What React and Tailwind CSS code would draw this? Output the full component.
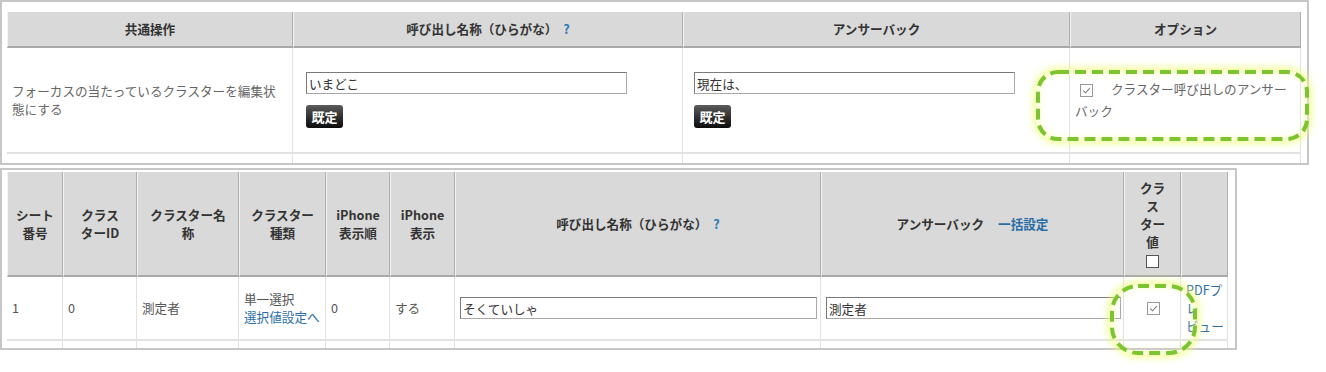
import React from 'react';

const linkColor = 'text-[#2b6ea6]';

function CheckBox({ checked, dark }) {
    return (
        <span
            className={
                'inline-flex h-[13px] w-[13px] items-center justify-center bg-white align-middle border ' +
                (dark ? 'border-[#555]' : 'border-[#9a9a9a]')
            }
        >
            {checked && (
                <svg viewBox="0 0 12 12" className="h-[11px] w-[11px]">
                    <path d="M2.5 6.2 L5 8.6 L9.6 3.4" fill="none" stroke="#7a7a7a" strokeWidth="1.1" />
                </svg>
            )}
        </span>
    );
}

function DefaultButton() {
    return (
        <button className="h-[23px] w-[37px] rounded-[3px] bg-linear-to-b from-[#5c5c5c] to-[#0d0d0d] text-[13px] font-bold leading-[23px] text-white">
            既定
        </button>
    );
}

function TextInput({ value, width }) {
    return (
        <input
            readOnly
            value={value}
            className={
                'h-[22px] border border-[#a8a8a8] border-t-[#7a7a7a] border-l-[#7a7a7a] bg-white px-[2px] text-[12.6px] text-[#333] outline-none ' +
                width
            }
        />
    );
}

function Highlight({ className, rx, w, h }) {
    return (
        <div
            className={
                'pointer-events-none absolute shadow-[0_0_7px_3px_rgba(238,255,120,0.7),inset_0_0_7px_3px_rgba(245,255,150,0.6)] ' +
                className
            }
        >
            <svg width={w} height={h} className="block">
                <rect
                    x="2"
                    y="2"
                    width={w - 4}
                    height={h - 4}
                    rx={rx}
                    fill="none"
                    stroke="#7cc530"
                    strokeWidth="4"
                    strokeDasharray="11 6"
                />
            </svg>
        </div>
    );
}

const topHead =
    'flex h-[36px] items-center justify-center bg-[#d9d9d9] border-b-2 border-b-[#a9a9a9] border-r border-r-[#aeaeae] border-l border-l-[#f2f2f2] font-bold text-[#333]';
const topCell = 'h-[106px] border-b-2 border-b-[#e2e2e2] border-r border-r-[#e2e2e2]';
const botHead =
    'flex h-[105px] flex-col items-center justify-center bg-[#d9d9d9] border-b-2 border-b-[#a9a9a9] border-r border-r-[#aeaeae] border-l border-l-[#f2f2f2] text-center font-bold text-[#333]';
const botCell = 'flex h-[64px] items-center border-b-2 border-b-[#e2e2e2] border-r border-r-[#e2e2e2] px-[5px]';
const gray = ' text-[#555]';
const stub = 'h-[20px] border-r border-r-[#e2e2e2]';

function App() {
    return (
        <div className="relative h-[372px] w-[1326px] overflow-hidden bg-white font-['Noto_Sans_CJK_JP','Noto_Sans',sans-serif] text-[12.6px] leading-[18px]">
            {/* Common operations */}
            <div className="h-[165px] w-[1309px] overflow-hidden border-2 border-[#c6c6c6] pl-[5px] pt-[10px]">
                <div className="grid grid-cols-[286px_390px_387px_231px]">
                    <div className={topHead}>共通操作</div>
                    <div className={topHead}>
                        呼び出し名称（ひらがな）<span className="ml-[6px] text-[#2d7ab8]">?</span>
                    </div>
                    <div className={topHead}>アンサーバック</div>
                    <div className={topHead}>オプション</div>

                    <div className={topCell + ' flex items-center px-[5px] text-[#666]'}>
                        <span>
                            フォーカスの当たっているクラスターを編集状
                            <br />
                            態にする
                        </span>
                    </div>
                    <div className={topCell + ' flex flex-col items-start justify-center gap-[11px] pl-[13px]'}>
                        <TextInput value="いまどこ" width="w-[321px]" />
                        <DefaultButton />
                    </div>
                    <div className={topCell + ' flex flex-col items-start justify-center gap-[11px] pl-[11px]'}>
                        <TextInput value="現在は、" width="w-[321px]" />
                        <DefaultButton />
                    </div>
                    <div className={topCell + ' flex items-center px-[5px] leading-[22px] text-[#666]'}>
                        <span>
                            <span className="ml-[5px] mr-[18px]">
                                <CheckBox checked />
                            </span>
                            クラスター呼び出しのアンサー
                            <br />
                            バック
                        </span>
                    </div>

                    <div className={stub}></div>
                    <div className={stub}></div>
                    <div className={stub}></div>
                    <div className={stub}></div>
                </div>
            </div>

            {/* Cluster list */}
            <div className="mt-[3px] h-[182px] w-[1237px] overflow-hidden border-2 border-[#c6c6c6] pl-[5px] pt-[2px]">
                <div className="grid grid-cols-[56px_74px_102px_87px_64px_65px_366px_303px_57px_47px]">
                    <div className={botHead}>
                        <span>シート<br />番号</span>
                    </div>
                    <div className={botHead}>
                        <span>クラス<br />ターID</span>
                    </div>
                    <div className={botHead}>
                        <span>クラスター名<br />称</span>
                    </div>
                    <div className={botHead}>
                        <span>クラスター<br />種類</span>
                    </div>
                    <div className={botHead}>
                        <span>iPhone<br />表示順</span>
                    </div>
                    <div className={botHead}>
                        <span>iPhone<br />表示</span>
                    </div>
                    <div className={botHead}>
                        <span>
                            呼び出し名称（ひらがな）<span className="ml-[6px] text-[#2d7ab8]">?</span>
                        </span>
                    </div>
                    <div className={botHead}>
                        <span>
                            アンサーバック<span className={'ml-[14px] ' + linkColor}>一括設定</span>
                        </span>
                    </div>
                    <div className={botHead}>
                        <span>クラ<br />ス<br />ター<br />値</span>
                        <span className="mt-[4px] flex">
                            <CheckBox dark />
                        </span>
                    </div>
                    <div className={botHead}></div>

                    <div className={botCell + gray}>1</div>
                    <div className={botCell + gray}>0</div>
                    <div className={botCell + gray}>測定者</div>
                    <div className={botCell + gray}>
                        <span>
                            単一選択
                            <br />
                            <span className={linkColor}>選択値設定へ</span>
                        </span>
                    </div>
                    <div className={botCell + gray}>0</div>
                    <div className={botCell + gray}>する</div>
                    <div className={botCell + ' pr-0'}>
                        <TextInput value="そくていしゃ" width="w-[357px]" />
                    </div>
                    <div className={botCell + ' pr-0'}>
                        <TextInput value="測定者" width="w-[295px]" />
                    </div>
                    <div className={botCell + ' justify-center pl-[7px]'}>
                        <CheckBox checked />
                    </div>
                    <div className={botCell + ' pl-[5px] pr-0 ' + linkColor}>
                        <span className="whitespace-nowrap">
                            PDFプ
                            <br />
                            レ
                            <br />
                            ビュー
                        </span>
                    </div>

                    <div className={stub}></div>
                    <div className={stub}></div>
                    <div className={stub}></div>
                    <div className={stub}></div>
                    <div className={stub}></div>
                    <div className={stub}></div>
                    <div className={stub}></div>
                    <div className={stub}></div>
                    <div className={stub}></div>
                    <div className={stub}></div>
                </div>
            </div>

            <Highlight className="left-[1036px] top-[70px] h-[71px] w-[273px] rounded-[22px]" rx={20} w={273} h={71} />
            <Highlight className="left-[1110px] top-[284px] h-[71px] w-[87px] rounded-[28px]" rx={26} w={87} h={71} />
        </div>
    );
}

export default App;
